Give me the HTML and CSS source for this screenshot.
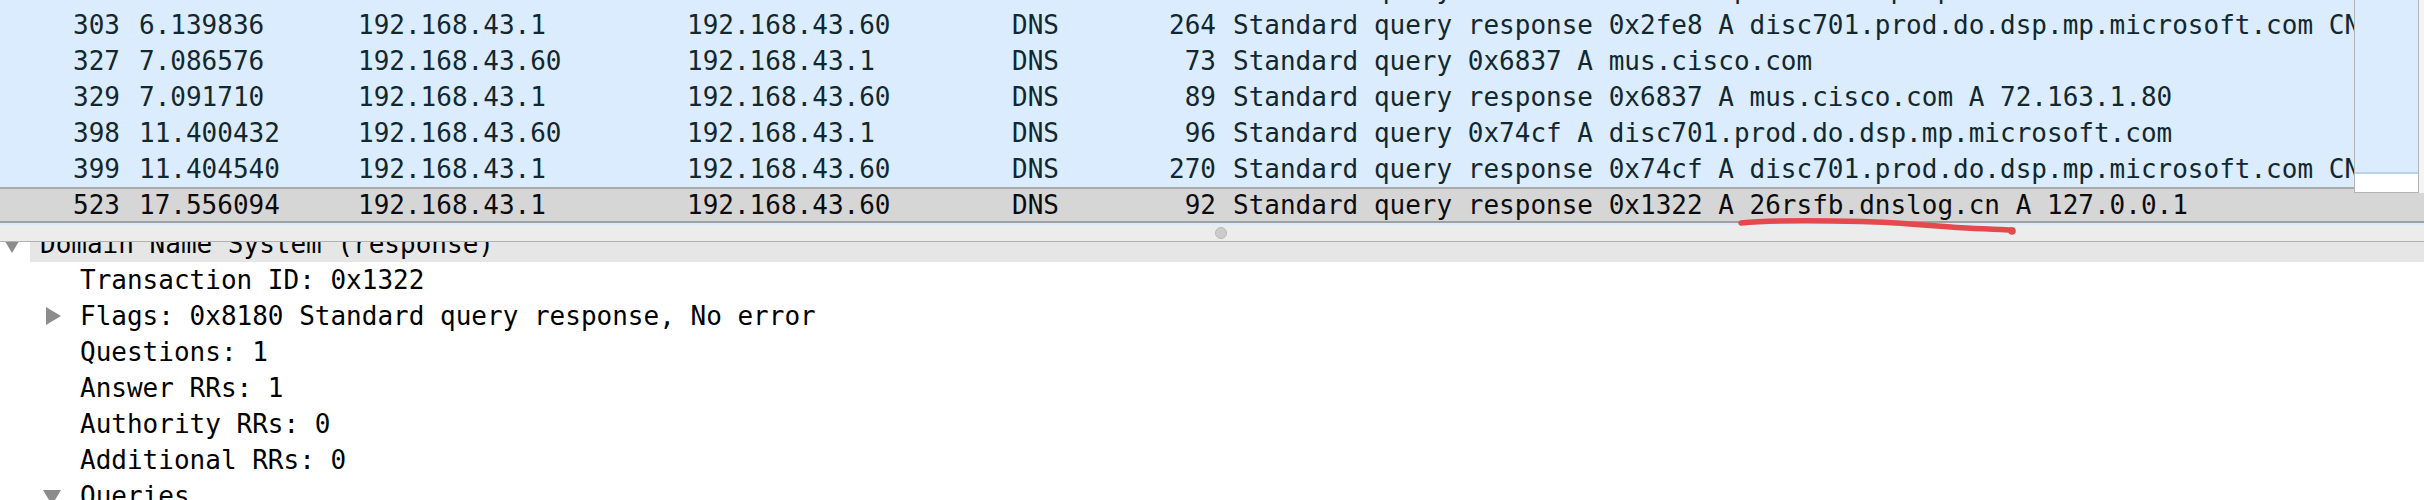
FILE: index.html
```html
<!DOCTYPE html>
<html lang="en">
<head>
<meta charset="utf-8">
<title>Wireshark - DNS packets</title>
<link rel="stylesheet" href="styles.css">
</head>
<body>
<div class="screen">
  <section class="packet-list">
    <div class="rows">
      <div class="row udp"><span class="c-no">302</span><span class="c-time">6.135209</span><span class="c-src">192.168.43.60</span><span class="c-dst">192.168.43.1</span><span class="c-proto">DNS</span><span class="c-len">96</span><span class="c-info">Standard query 0x2fe8 A disc701.prod.do.dsp.mp.microsoft.com</span></div>
      <div class="row udp"><span class="c-no">303</span><span class="c-time">6.139836</span><span class="c-src">192.168.43.1</span><span class="c-dst">192.168.43.60</span><span class="c-proto">DNS</span><span class="c-len">264</span><span class="c-info">Standard query response 0x2fe8 A disc701.prod.do.dsp.mp.microsoft.com CNAME disc701.prod.do.dsp.mp.microsoft.com.edgekey.net</span></div>
      <div class="row udp"><span class="c-no">327</span><span class="c-time">7.086576</span><span class="c-src">192.168.43.60</span><span class="c-dst">192.168.43.1</span><span class="c-proto">DNS</span><span class="c-len">73</span><span class="c-info">Standard query 0x6837 A mus.cisco.com</span></div>
      <div class="row udp"><span class="c-no">329</span><span class="c-time">7.091710</span><span class="c-src">192.168.43.1</span><span class="c-dst">192.168.43.60</span><span class="c-proto">DNS</span><span class="c-len">89</span><span class="c-info">Standard query response 0x6837 A mus.cisco.com A 72.163.1.80</span></div>
      <div class="row udp"><span class="c-no">398</span><span class="c-time">11.400432</span><span class="c-src">192.168.43.60</span><span class="c-dst">192.168.43.1</span><span class="c-proto">DNS</span><span class="c-len">96</span><span class="c-info">Standard query 0x74cf A disc701.prod.do.dsp.mp.microsoft.com</span></div>
      <div class="row udp"><span class="c-no">399</span><span class="c-time">11.404540</span><span class="c-src">192.168.43.1</span><span class="c-dst">192.168.43.60</span><span class="c-proto">DNS</span><span class="c-len">270</span><span class="c-info">Standard query response 0x74cf A disc701.prod.do.dsp.mp.microsoft.com CNAME disc701.prod.do.dsp.mp.microsoft.com.edgekey.net</span></div>
      <div class="row selected"><span class="c-no">523</span><span class="c-time">17.556094</span><span class="c-src">192.168.43.1</span><span class="c-dst">192.168.43.60</span><span class="c-proto">DNS</span><span class="c-len">92</span><span class="c-info">Standard query response 0x1322 A 26rsfb.dnslog.cn A 127.0.0.1</span></div>
    </div>
    <div class="minimap">
      <div class="minimap-box">
        <div class="minimap-fill"></div>
        <div class="minimap-cursor"></div>
      </div>
    </div>
  </section>

  <div class="splitter"><span class="handle"></span></div>

  <section class="details">
    <div class="tree">
      <div class="node current"><span class="twisty"><span class="tri-down"></span></span><span class="label">Domain Name System (response)</span></div>
      <div class="node level1"><span class="twisty"></span><span class="label">Transaction ID: 0x1322</span></div>
      <div class="node level1"><span class="twisty"><span class="tri-right"></span></span><span class="label">Flags: 0x8180 Standard query response, No error</span></div>
      <div class="node level1"><span class="twisty"></span><span class="label">Questions: 1</span></div>
      <div class="node level1"><span class="twisty"></span><span class="label">Answer RRs: 1</span></div>
      <div class="node level1"><span class="twisty"></span><span class="label">Authority RRs: 0</span></div>
      <div class="node level1"><span class="twisty"></span><span class="label">Additional RRs: 0</span></div>
      <div class="node level1"><span class="twisty"><span class="tri-down"></span></span><span class="label">Queries</span></div>
    </div>
  </section>

  <svg class="annotation" width="2424" height="500" viewBox="0 0 2424 500" aria-hidden="true">
    <path d="M1741 223 C1765 220.5 1820 220.5 1862 221.5 C1905 222.5 1940 227 1975 228.5 C1995 229.3 2005 229.5 2012 230" fill="none" stroke="#e4494e" stroke-width="5.5" stroke-linecap="round"/>
    <circle cx="2012" cy="231" r="3.8" fill="#e4494e"/>
  </svg>
</div>
</body>
</html>
```

FILE: styles.css
```css
* { box-sizing: border-box; }

html, body {
  margin: 0;
  padding: 0;
  background: #ffffff;
}

.screen {
  position: relative;
  width: 2424px;
  height: 500px;
  overflow: hidden;
  font-family: "DejaVu Sans Mono", "Liberation Mono", monospace;
  font-size: 26px;
}

/* ---------- packet list ---------- */
.packet-list {
  position: relative;
  height: 225px;
  overflow: hidden;
  background: #daecfd;
}

.rows {
  display: flex;
  flex-direction: column;
  margin-top: -29px;
}

.row {
  display: grid;
  grid-template-columns: 120px 238px 329px 325px 88px 116px 1fr;
  height: 36px;
  line-height: 36px;
  white-space: nowrap;
}

.row.udp {
  background: #daecfd;
  color: #12272e;
}

.row.selected {
  background: #d6d6d6;
  color: #0c0c0c;
  border-top: 2px solid #a9a9a9;
  border-bottom: 2px solid #a0a0a0;
  line-height: 32px;
}

.c-no { text-align: right; }
.c-time { padding-left: 19px; }
.c-len { text-align: right; }
.c-info {
  padding-left: 17px;
  overflow: hidden;
}

/* overview scrollbar on the right of the list */
.minimap {
  position: absolute;
  top: 0;
  left: 2354px;
  width: 70px;
  height: 193px;
  background: #f4f4f4;
}

.minimap-box {
  width: 65px;
  height: 100%;
  display: flex;
  flex-direction: column;
  background: #ffffff;
  border: 1px solid #b3b3b3;
  border-top: none;
}

.minimap-fill {
  height: 172px;
  background: #daecfd;
}

.minimap-cursor {
  height: 2px;
  background: #b6d2ef;
}

/* ---------- splitter ---------- */
.splitter {
  height: 17px;
  background: #ececec;
  border-bottom: 1px solid #b0b0b0;
  display: flex;
  align-items: center;
  padding-left: 1215px;
}

.handle {
  width: 12px;
  height: 12px;
  border-radius: 50%;
  background: #cbcbcb;
  border: 1px solid #b9b9b9;
}

/* ---------- details tree ---------- */
.details {
  height: 258px;
  overflow: hidden;
  background: #ffffff;
  color: #000000;
}

.tree {
  display: flex;
  flex-direction: column;
  margin-top: -16px;
}

.node {
  display: flex;
  align-items: center;
  height: 36px;
  line-height: 36px;
  white-space: nowrap;
}

.node.level1 { padding-left: 40px; }

.twisty {
  width: 30px;
  height: 36px;
  flex: none;
  display: flex;
  align-items: center;
  padding-left: 3px;
}

.label {
  flex: 1;
  height: 36px;
  padding-left: 10px;
}

.node.current .label {
  background: #e6e6e6;
}

.tri-down {
  width: 0;
  height: 0;
  border-left: 9px solid transparent;
  border-right: 9px solid transparent;
  border-top: 15px solid #8c8c8c;
  margin-top: 3px;
}

.tri-right {
  width: 0;
  height: 0;
  margin-left: 3px;
  border-top: 9px solid transparent;
  border-bottom: 9px solid transparent;
  border-left: 15px solid #8c8c8c;
}

/* ---------- hand-drawn annotation ---------- */
.annotation {
  position: absolute;
  top: 0;
  left: 0;
  pointer-events: none;
}
```
